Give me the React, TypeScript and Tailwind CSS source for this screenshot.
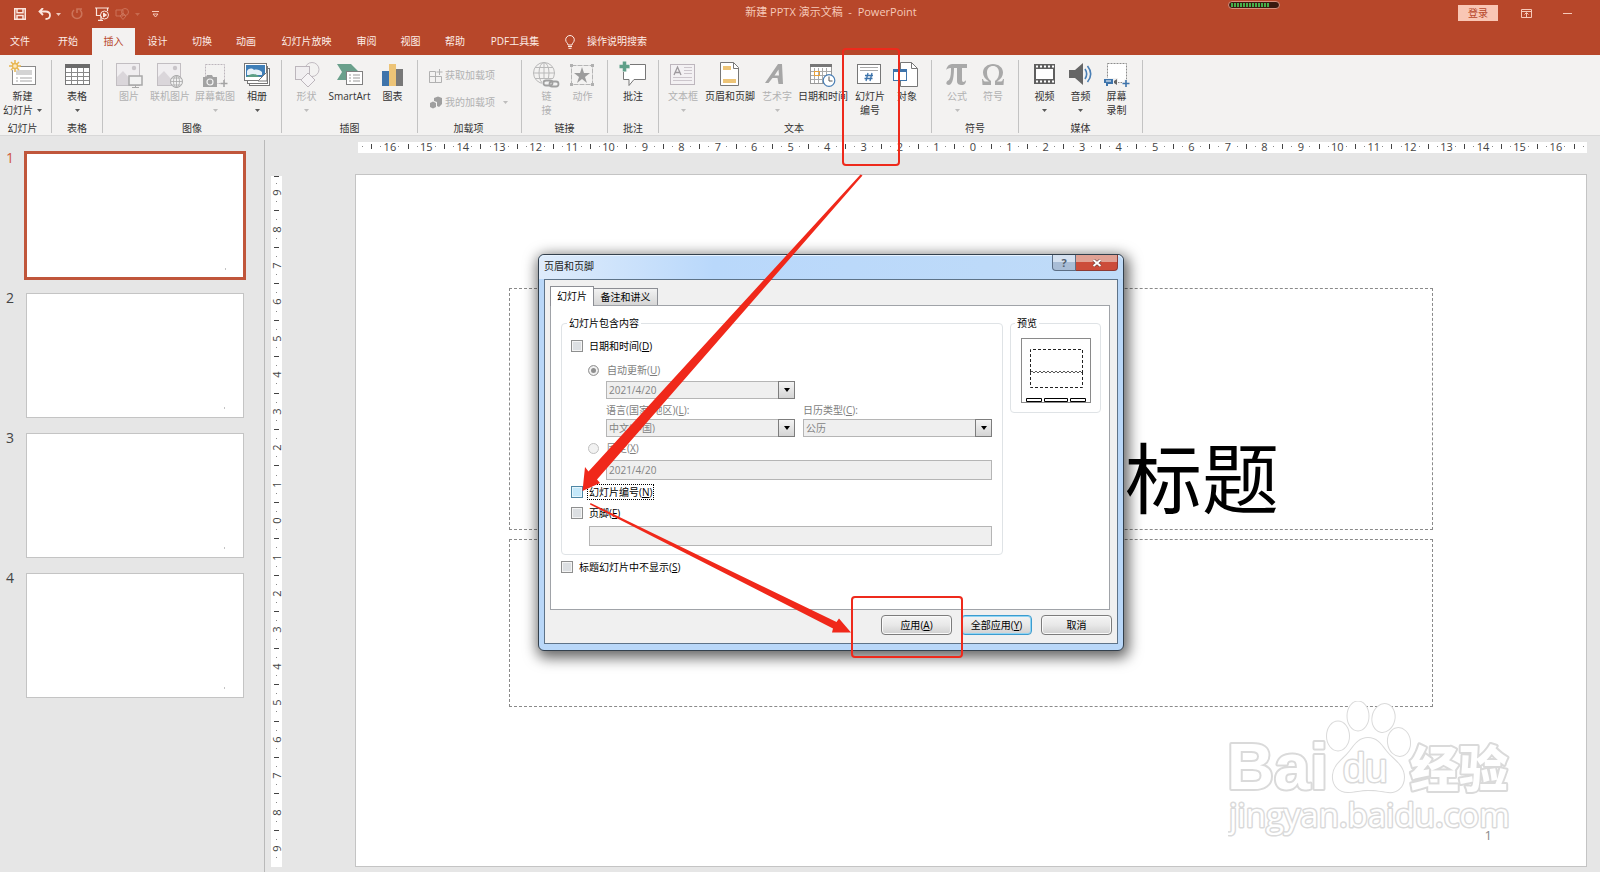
import React from 'react';

type Mark = { kind: 'num'; text: string } | { kind: 'tick' } | { kind: 'dot' };

function rulerMarks(from: number, to: number): Mark[] {
  const marks: Mark[] = [];
  for (let q = from; q <= to; q++) {
    const r = Math.abs(q) % 4;
    if (r === 0) marks.push({ kind: 'num', text: String(Math.abs(q) / 4) });
    else if (r === 2) marks.push({ kind: 'tick' });
    else marks.push({ kind: 'dot' });
  }
  return marks;
}

function HorizontalRuler() {
  return (
    <div className="flex h-[11px] items-center bg-white pb-0.5 text-[11px] leading-[11px] text-[#444]">
      {rulerMarks(-67, 67).map((m, i) => (
        <span key={i} className="flex min-w-0 flex-1 items-center justify-center">
          {m.kind === 'num' && <span>{m.text}</span>}
          {m.kind === 'tick' && <span className="h-[5px] w-px shrink-0 bg-[#444]" />}
          {m.kind === 'dot' && <span className="size-px shrink-0 bg-[#888]" />}
        </span>
      ))}
    </div>
  );
}

function VerticalRuler() {
  return (
    <div className="flex w-[11px] flex-col items-center bg-white pb-[5px] text-[11px] leading-[11px] text-[#444]">
      <span className="mb-0.5 h-px w-[5px] bg-[#444]" />
      {rulerMarks(-37, 37).map((m, i) => (
        <span key={i} className="flex min-h-0 flex-1 items-center justify-center">
          {m.kind === 'num' && <span className="-rotate-90">{m.text}</span>}
          {m.kind === 'tick' && <span className="h-px w-[5px] shrink-0 bg-[#444]" />}
          {m.kind === 'dot' && <span className="size-px shrink-0 bg-[#888]" />}
        </span>
      ))}
    </div>
  );
}

function Icon({ children }: { children: React.ReactNode }) {
  return (
    <svg viewBox="0 0 28 28" className="size-7 shrink-0" fill="none" aria-hidden="true">
      {children}
    </svg>
  );
}

const NewSlideIcon = (
  <Icon>
    <rect x="3.5" y="6.5" width="23" height="18" fill="#fff" stroke="#8a8a8a" />
    <rect x="7" y="10" width="16" height="5" fill="#d4d4d4" />
    <path d="M7 18h2M11 18h12M7 21h2M11 21h12" stroke="#a5a5a5" />
    <circle cx="6" cy="6" r="5" fill="#f2f2f2" />
    <path d="M6 0v3M6 9v3M0 6h3M9 6h3M2 2l2 2M8 8l2 2M10 2l-2 2M4 8l-2 2" stroke="#e8b650" strokeWidth="1.5" />
    <circle cx="6" cy="6" r="2.5" stroke="#e8b650" strokeWidth="1.3" fill="#fbe9c0" />
  </Icon>
);
const TableIcon = (
  <Icon>
    <rect x="2.5" y="4.5" width="24" height="20" fill="#fff" stroke="#777" />
    <rect x="2" y="4" width="25" height="4" fill="#6b6b6b" />
    <path d="M3 12.500h23M3 16.500h23M3 20.500h23M8.500 8v16M14.500 8v16M20.500 8v16" stroke="#8a8a8a" />
  </Icon>
);
const PictureIcon = (
  <Icon>
    <rect x="1.500" y="3.500" width="23" height="22" fill="#f0eef0" stroke="#c2bec2" />
    <circle cx="19" cy="8" r="2.200" fill="#c9c5c9" />
    <path d="M2 17l6-6 8 9v5H2z" fill="#dad6da" />
    <rect x="14" y="16" width="13" height="9" fill="#f2f2f2" stroke="#a8a8a8" strokeWidth="1.500" />
    <path d="M17 27.500h7M20.500 25v2" stroke="#a8a8a8" />
  </Icon>
);
const OnlinePictureIcon = (
  <Icon>
    <rect x="1.500" y="3.500" width="23" height="22" fill="#f0eef0" stroke="#c2bec2" />
    <circle cx="19" cy="8" r="2.200" fill="#c9c5c9" />
    <path d="M2 17l6-6 8 9v5H2z" fill="#dad6da" />
    <circle cx="20.500" cy="21.500" r="6" fill="#f2f2f2" stroke="#a8a8a8" />
    <path d="M14.500 21.500h12M20.500 15.500v12M16 18h9M16 25h9" stroke="#a8a8a8" strokeWidth=".8" />
    <ellipse cx="20.500" cy="21.500" rx="3" ry="6" stroke="#a8a8a8" strokeWidth=".8" />
  </Icon>
);
const ScreenshotIcon = (
  <Icon>
    <rect x="4.500" y="4.500" width="19" height="19" stroke="#bcb6bc" strokeDasharray="2 1" />
    <path d="M2 17h3l1-2h5l1 2h4v10H2z" fill="#a3a3a3" />
    <circle cx="9" cy="22" r="3" stroke="#f2f2f2" strokeWidth="1.200" />
    <path d="M19.500 23.500h7M23 20v7" stroke="#a3a3a3" strokeWidth="1.500" />
  </Icon>
);
const AlbumIcon = (
  <Icon>
    <rect x="6.500" y="8.500" width="20" height="17" fill="#fff" stroke="#777" />
    <rect x="4.500" y="6.500" width="20" height="17" fill="#fff" stroke="#777" />
    <rect x="1.500" y="3.500" width="22" height="17" fill="#fff" stroke="#777" />
    <rect x="3" y="5" width="19" height="12" fill="#3f7fb8" />
    <path d="M4 11c2-3 5-3 7-1 3-1 6 0 8 2v3H4z" fill="#e8f1f8" />
    <path d="M3 17c4-3 7-4 11-2l3 2z" fill="#5d9f86" />
    <path d="M15 21l9-9v9z" fill="#fff" stroke="#777" />
  </Icon>
);
const ShapesIcon = (
  <Icon>
    <circle cx="19" cy="9.500" r="7" stroke="#c2bcc2" />
    <rect x="2.500" y="6.500" width="14" height="13" fill="#f0eef0" stroke="#bcb6bc" />
    <path d="M15 13l7 7-7 7-7-7z" fill="#f5f3f5" stroke="#bcb6bc" />
  </Icon>
);
const SmartArtIcon = (
  <Icon>
    <path d="M1 4h14l7 7-3 4-6 5H1l5-8z" fill="#6aa08c" />
    <rect x="10.500" y="11.500" width="16" height="13" fill="#fff" stroke="#808080" />
    <path d="M13 15h2M17 15h7M13 18h2M17 18h7M13 21h2M17 21h7" stroke="#999" />
  </Icon>
);
const ChartIcon = (
  <Icon>
    <rect x="3" y="11" width="7" height="15" fill="#3e74ab" />
    <rect x="10" y="4" width="7" height="22" fill="#edc477" />
    <rect x="17" y="9" width="7" height="17" fill="#787878" />
  </Icon>
);
const LinkIcon = (
  <Icon>
    <circle cx="11" cy="13" r="10.500" stroke="#b9b9b9" />
    <ellipse cx="11" cy="13" rx="5" ry="10.500" stroke="#b9b9b9" />
    <path d="M11 2.500v21M.5 13h21M2 7.500h18M2 18.500h18" stroke="#b9b9b9" />
    <rect x="9" y="19" width="18" height="9" fill="#f2f2f2" />
    <rect x="10.500" y="20.500" width="9" height="5" rx="2.500" stroke="#a0a0a0" strokeWidth="1.800" />
    <rect x="16.500" y="21.500" width="9" height="5" rx="2.500" stroke="#a0a0a0" strokeWidth="1.800" />
  </Icon>
);
const ActionIcon = (
  <Icon>
    <rect x="2.500" y="5.500" width="21" height="19" stroke="#b5b5b5" strokeDasharray="5 1" />
    <path d="M1 4h3v3H1zM22 4h3v3h-3zM1 23h3v3H1zM22 23h3v3h-3z" fill="#b0b0b0" />
    <path d="M13 7l2 6h6l-5 4 2 6-5-4-5 4 2-6-5-4h6z" fill="#9c9c9c" />
  </Icon>
);
const CommentIcon = (
  <Icon>
    <path d="M5.500 4.500h21v15H15l-5 6v-6H4.500v-15z" fill="#fff" stroke="#777" />
    <path d="M5.500 1v11M0 6.500h11" stroke="#f2f2f2" strokeWidth="5.500" />
    <path d="M5.500 1.500v10M.5 6.500h10" stroke="#5e9f88" strokeWidth="3.500" />
  </Icon>
);
const TextBoxIcon = (
  <Icon>
    <rect x="1.500" y="4.500" width="24" height="20" fill="#f3f1f3" stroke="#bdb6bd" />
    <path d="M5 15l3.500-8L12 15M6 12.500h5" stroke="#9e9a9e" strokeWidth="1.300" />
    <path d="M15 7.500h8M15 10.500h8M15 13.500h8M4 17.500h19M4 20.500h19" stroke="#ccc6cc" />
  </Icon>
);
const HeaderFooterIcon = (
  <Icon>
    <path d="M4.500 2.500h13l5 5v18h-18z" fill="#fff" stroke="#777" />
    <path d="M17.500 2.500v6h5" stroke="#777" />
    <path d="M7 6h8v4H7zM7 19h13v4H7z" fill="#edc477" />
  </Icon>
);
const WordArtIcon = (
  <Icon>
    <path d="M2 23h3.500l4-5h5l1 6H20L19 4h-4zM11.500 15.500l4-6 .5 6z" fill="#a6a6a6" fillRule="evenodd" />
  </Icon>
);
const DateTimeIcon = (
  <Icon>
    <rect x="1.500" y="4.500" width="21" height="19" fill="#fff" stroke="#999" />
    <rect x="1" y="4" width="22" height="3" fill="#777" />
    <path d="M2 11.500h20M2 15.500h20M2 19.500h20M5.500 8v15M9.500 8v15M13.500 8v15M17.500 8v15" stroke="#aaa" />
    <rect x="5.500" y="11.500" width="5" height="4" stroke="#e9a23b" />
    <circle cx="20" cy="20.500" r="5.800" fill="#fff" stroke="#4a7fb5" strokeWidth="1.200" />
    <path d="M20 16.500v4.500h3.500" stroke="#555" />
  </Icon>
);
const SlideNumberIcon = (
  <Icon>
    <rect x="1.500" y="4.500" width="23" height="19" fill="#fff" stroke="#777" />
    <path d="M4 7.500h18M4 10.500h18" stroke="#aaa" />
    <path d="M12 13l-2 8M16 13l-2 8M9 15.500h8M8.500 18.500h8" stroke="#3e74ab" strokeWidth="1.300" />
  </Icon>
);
const ObjectIcon = (
  <Icon>
    <path d="M7.500 2.500h11l6 6v18h-17z" fill="#fff" stroke="#777" />
    <path d="M18.500 2.500v6h6" stroke="#777" />
    <rect x=".5" y="9.500" width="13" height="11" fill="#fff" stroke="#3e74ab" />
    <rect x="0" y="9" width="14" height="3" fill="#3e74ab" />
  </Icon>
);
const PiIcon = (
  <Icon>
    <path d="M3 10c1-4 3-6 6-6h15v4h-5v12c0 3 3 2 4 0 0 4-2 5-4 5-3 0-5-1-5-4V8h-3c0 7-1 17-5 17-4 0-3-4 0-5 2-3 2-8 2-12-3 0-4 1-5 2z" fill="#a9a9a9" />
  </Icon>
);
const OmegaIcon = (
  <Icon>
    <path d="M3 19h1c.5 2 1 2.500 3 2.500h3C6 19 4 16 4 12.500 4 7.500 8.500 4 14 4s10 3.500 10 8.500c0 3.500-2 6.500-6 9h3c2 0 2.500-.5 3-2.500h1l-.5 6H16v-4c3-2 4-5 4-8.500C20 8.500 17.500 6 14 6s-6 2.500-6 6.500c0 3.500 1 6.500 4 8.500v4H3.500z" fill="#a9a9a9" />
  </Icon>
);
const VideoIcon = (
  <Icon>
    <rect x="3" y="4" width="21" height="20" fill="#5f5f5f" />
    <rect x="5" y="9" width="17" height="10" fill="#fff" />
    <path d="M5 6.500h18M5 21.500h18" stroke="#fff" strokeWidth="2" strokeDasharray="2 2" />
  </Icon>
);
const AudioIcon = (
  <Icon>
    <path d="M2 10h6l8-7v22l-8-7H2z" fill="#666" />
    <path d="M18 9c2 3 2 7 0 10M20.500 6c4 5 4 11 0 16" stroke="#4a7fb5" strokeWidth="1.600" />
  </Icon>
);
const ScreenRecordIcon = (
  <Icon>
    <rect x="4.500" y="3.500" width="19" height="19" fill="#fff" stroke="#8c8c8c" strokeDasharray="2 1" />
    <path d="M0 18h15v8H0z" fill="#f2f2f2" />
    <path d="M1 19h9v5H5v2H3v-3H1z" fill="#3e74ab" />
    <path d="M3 21h5" stroke="#fff" />
    <path d="M11 21l3-2v6l-3-2z" fill="#666" />
    <path d="M19 23.500h8M23 19.500v8" stroke="#f2f2f2" strokeWidth="4" />
    <path d="M19.500 23.500h7M23 20v7" stroke="#3e74ab" strokeWidth="1.600" />
  </Icon>
);

function Caret({ className = '' }: { className?: string }) {
  return (
    <svg viewBox="0 0 5 3" className={`h-[3px] w-[5px] shrink-0 opacity-80 ${className}`} aria-hidden="true">
      <path d="M0 0h5L2.500 3z" fill="currentColor" />
    </svg>
  );
}

type Tool = {
  icon: React.ReactNode;
  lines: string[];
  width: string;
  disabled?: boolean;
  caret?: 'below' | 'inline';
};

function ToolButton({ icon, lines, width, disabled, caret }: Tool) {
  return (
    <button
      type="button"
      disabled={disabled}
      className={`flex shrink-0 flex-col items-center whitespace-nowrap text-[10px] leading-[13px] ${width} ${disabled ? 'text-[#b1b1b1]' : 'text-[#333]'}`}
    >
      {icon}
      {lines.map((l, i) => (
        <span key={i} className="mt-px flex items-center gap-1 first-of-type:mt-0.5">
          {l}
          {caret === 'inline' && i === lines.length - 1 && <Caret />}
        </span>
      ))}
      {caret === 'below' && <Caret className="mt-1.5" />}
    </button>
  );
}

function Group({ title, width, children }: { title: string; width: string; children: React.ReactNode }) {
  return (
    <section className={`flex shrink-0 flex-col items-center justify-between border-r border-[#c3c3c3] ${width}`}>
      <div className="flex justify-center">{children}</div>
      <h2 className="text-[10px] leading-[9px] text-[#333]">{title}</h2>
    </section>
  );
}

const groups: { title: string; width: string; tools: Tool[] }[] = [
  {
    title: '幻灯片',
    width: 'w-[52px] pr-1.5',
    tools: [{ icon: NewSlideIcon, lines: ['新建', '幻灯片'], width: 'w-[46px]', caret: 'inline' }],
  },
  { title: '表格', width: 'w-[51px]', tools: [{ icon: TableIcon, lines: ['表格'], width: 'w-10', caret: 'below' }] },
  {
    title: '图像',
    width: 'w-[179px]',
    tools: [
      { icon: PictureIcon, lines: ['图片'], width: 'w-10', disabled: true },
      { icon: OnlinePictureIcon, lines: ['联机图片'], width: 'w-[42px]', disabled: true },
      { icon: ScreenshotIcon, lines: ['屏幕截图'], width: 'w-12', disabled: true, caret: 'below' },
      { icon: AlbumIcon, lines: ['相册'], width: 'w-9', caret: 'below' },
    ],
  },
  {
    title: '插图',
    width: 'w-[136px]',
    tools: [
      { icon: ShapesIcon, lines: ['形状'], width: 'w-[34px]', disabled: true, caret: 'below' },
      { icon: SmartArtIcon, lines: ['SmartArt'], width: 'w-[52px]' },
      { icon: ChartIcon, lines: ['图表'], width: 'w-[34px]' },
    ],
  },
];

const moreGroups: { title: string; width: string; tools: Tool[] }[] = [
  {
    title: '链接',
    width: 'w-[86px]',
    tools: [
      { icon: LinkIcon, lines: ['链', '接'], width: 'w-9', disabled: true },
      { icon: ActionIcon, lines: ['动作'], width: 'w-9', disabled: true },
    ],
  },
  { title: '批注', width: 'w-[51px]', tools: [{ icon: CommentIcon, lines: ['批注'], width: 'w-10' }] },
  {
    title: '文本',
    width: 'w-[273px] pr-0.5',
    tools: [
      { icon: TextBoxIcon, lines: ['文本框'], width: 'w-[38px]', disabled: true, caret: 'below' },
      { icon: HeaderFooterIcon, lines: ['页眉和页脚'], width: 'w-14' },
      { icon: WordArtIcon, lines: ['艺术字'], width: 'w-[38px]', disabled: true, caret: 'below' },
      { icon: DateTimeIcon, lines: ['日期和时间'], width: 'w-[54px]' },
      { icon: SlideNumberIcon, lines: ['幻灯片', '编号'], width: 'w-10' },
      { icon: ObjectIcon, lines: ['对象'], width: 'w-[34px]' },
    ],
  },
  {
    title: '符号',
    width: 'w-[87px]',
    tools: [
      { icon: PiIcon, lines: ['公式'], width: 'w-9', disabled: true, caret: 'below' },
      { icon: OmegaIcon, lines: ['符号'], width: 'w-9', disabled: true },
    ],
  },
  {
    title: '媒体',
    width: 'w-[124px]',
    tools: [
      { icon: VideoIcon, lines: ['视频'], width: 'w-9', caret: 'below' },
      { icon: AudioIcon, lines: ['音频'], width: 'w-9', caret: 'below' },
      { icon: ScreenRecordIcon, lines: ['屏幕', '录制'], width: 'w-9' },
    ],
  },
];

function TitleBar() {
  return (
    <header className="flex h-7 items-center bg-[#b7472a] text-[10px] text-[#f6c9b9]">
      <div className="flex flex-1 items-center pl-3.5">
        <button type="button" aria-label="保存" className="text-[#fbe6de]">
          <svg viewBox="0 0 12 12" className="size-3" fill="none" stroke="currentColor">
            <path d="M.75.75h10.500v10.500H.75zM3 .75v4h6v-4M3 11V7.500h6V11" strokeWidth="1.500" />
          </svg>
        </button>
        <button type="button" aria-label="撤消" className="ml-3 flex items-center gap-1 text-[#fbe6de]">
          <svg viewBox="0 0 14 12" className="h-3 w-3.5" fill="none" stroke="currentColor" strokeWidth="1.800">
            <path d="M5 0L1.500 3.500 5 7M2 3.500h5.500c6 0 6 7.500 0 7.500" />
          </svg>
          <Caret />
        </button>
        <button type="button" aria-label="重复" className="ml-2.5 text-[#cc7359]">
          <svg viewBox="0 0 12 12" className="size-3" fill="none" stroke="currentColor" strokeWidth="1.600">
            <path d="M3 2a4.800 4.800 0 1 0 6 0M6 5V1h5" />
          </svg>
        </button>
        <button type="button" aria-label="从头开始" className="ml-3 text-[#fbe6de]">
          <svg viewBox="0 0 14 14" className="size-3.5" fill="none" stroke="currentColor">
            <path d="M0 1h14M1.500 1v7.500H6M12.500 1v3M3 13.400h5M6 9v4" strokeWidth="1.200" />
            <circle cx="9.500" cy="8" r="4" />
            <path d="M8.500 6v4l3-2z" fill="currentColor" />
          </svg>
        </button>
        <button type="button" aria-label="形状" className="ml-1.5 flex items-center gap-1.5 text-[#cc7359]">
          <svg viewBox="0 0 14 12" className="h-3 w-3.5" fill="none" stroke="currentColor">
            <circle cx="10" cy="4" r="3.500" />
            <path d="M1 2h7v6H1zM8 5l3 3-3 3.500L5 8z" />
          </svg>
          <Caret />
        </button>
        <button type="button" aria-label="自定义快速访问工具栏" className="ml-3">
          <svg viewBox="0 0 7 7" className="size-[7px]" fill="none" stroke="currentColor">
            <path d="M0 .5h7M1 3l2.500 3L6 3z" />
          </svg>
        </button>
      </div>
      <h1 className="ml-12 whitespace-pre pb-1 text-[11px]">新建 PPTX 演示文稿{'  -  '}PowerPoint</h1>
      <div className="flex flex-1 items-center justify-end pb-0.5">
        <div className="mr-[178px] mb-4 flex h-2 w-[52px] gap-px overflow-hidden rounded-full border border-[#d88f7d] bg-[#3a1a10] px-0.5 py-px">
          {Array.from({ length: 13 }, (_, i) => (
            <span key={i} className="w-0.5 bg-[#44b04a]" />
          ))}
        </div>
        <button type="button" className="h-4 w-10 bg-[#f9c6b4] text-[10px] leading-4 text-[#b7472a]">
          登录
        </button>
        <button type="button" aria-label="功能区显示选项" className="ml-[23px]">
          <svg viewBox="0 0 11 9" className="h-[9px] w-[11px]" fill="none" stroke="currentColor">
            <path d="M.5.5h10v8H.5zM.5 2.500h10M5.500 8V4M3.500 5.500l2-2 2 2" />
          </svg>
        </button>
        <button type="button" aria-label="最小化" className="mr-7 ml-[31px] flex h-3 w-[9px] items-center">
          <span className="h-px w-full bg-current" />
        </button>
      </div>
    </header>
  );
}

const tabs: { label: string; width: string; active?: boolean }[] = [
  { label: '文件', width: 'w-10' },
  { label: '开始', width: 'w-[52px] pl-1' },
  { label: '插入', width: 'w-[43px]', active: true },
  { label: '设计', width: 'w-[45px]' },
  { label: '切换', width: 'w-11' },
  { label: '动画', width: 'w-11' },
  { label: '幻灯片放映', width: 'w-[77px]' },
  { label: '审阅', width: 'w-[43px]' },
  { label: '视图', width: 'w-[45px]' },
  { label: '帮助', width: 'w-11' },
  { label: 'PDF工具集', width: 'w-[76px]' },
];

function TabBar() {
  return (
    <nav className="flex h-[27px] items-stretch bg-[#b7472a] text-[10px] text-[#fdeee8]">
      {tabs.map((t) => (
        <button
          key={t.label}
          type="button"
          className={`shrink-0 whitespace-nowrap ${t.width} ${t.active ? 'bg-[#f3f2f1] text-[#b7472a]' : ''}`}
        >
          {t.label}
        </button>
      ))}
      <button type="button" className="ml-3 flex items-center gap-3">
        <svg viewBox="0 0 10 14" className="h-3.5 w-2.5" fill="none" stroke="currentColor">
          <path d="M3 10C3 8 .7 7.500.7 4.800a4.300 4.300 0 0 1 8.600 0C9.300 7.500 7 8 7 10zM3 11.500h4M3.500 13.300h3" />
        </svg>
        操作说明搜索
      </button>
    </nav>
  );
}

function Ribbon() {
  return (
    <div className="flex h-[81px] items-stretch overflow-hidden border-b border-[#d8d8d8] bg-[#f3f2f1] pt-[5px] pb-0.5">
      {groups.map((g) => (
        <Group key={g.title} title={g.title} width={g.width}>
          {g.tools.map((t) => (
            <ToolButton key={t.lines.join('')} {...t} />
          ))}
        </Group>
      ))}
      <Group title="加载项" width="w-[104px] pr-0.5">
        <div className="flex flex-col gap-3 pt-2 text-[10px] text-[#b1b1b1]">
          <button type="button" disabled className="flex h-[15px] items-center gap-0.5">
            <svg viewBox="0 0 14 14" className="size-3.5" fill="none" stroke="currentColor">
              <path d="M.5 2.500h6v11h-6zM.5 7.500h12v6h-12M10.500 0v6M7.500 3h6" />
            </svg>
            获取加载项
          </button>
          <button type="button" disabled className="flex h-[15px] items-center gap-0.5">
            <svg viewBox="0 0 14 14" className="size-3.5" fill="#9f9f9f">
              <path d="M5 2l4-1.500L13 2v6l-3 3-2-1V6L5 5zM1 7l3-1.500L7 7v4l-3 1.500L1 11z" />
            </svg>
            我的加载项
            <Caret className="ml-1.5" />
          </button>
        </div>
      </Group>
      {moreGroups.map((g) => (
        <Group key={g.title} title={g.title} width={g.width}>
          {g.tools.map((t) => (
            <ToolButton key={t.lines.join('')} {...t} />
          ))}
        </Group>
      ))}
    </div>
  );
}

function SlidePane() {
  return (
    <aside className="mt-1 w-[265px] shrink-0 border-r border-[#b9b9b9]">
      <ol className="flex flex-col gap-4 pt-[13px] pl-1.5">
        {[1, 2, 3, 4].map((n) => (
          <li key={n} className="flex h-[125px] gap-3 text-[14px] leading-[9px] not-last:-mb-px">
            <span className={`w-2 ${n === 1 ? 'text-[#d0573a]' : 'text-[#444]'}`}>{n}</span>
            <button
              type="button"
              aria-label={`幻灯片 ${n}`}
              className={`flex w-[218px] items-end justify-end bg-white px-[18px] pb-2 ${n === 1 ? 'outline-[3px] -outline-offset-1 outline-[#c0563b]' : 'border border-[#c4c4c4]'}`}
            >
              <span className="h-0.5 w-px bg-[#c4c4c4]" />
            </button>
          </li>
        ))}
      </ol>
    </aside>
  );
}

function Check({ label, k, hot, focus }: { label: string; k: string; hot?: boolean; focus?: boolean }) {
  return (
    <label className={`flex items-center gap-1.5 text-black ${focus ? 'h-4' : 'h-3.5'}`}>
      <input
        type="checkbox"
        className={`size-3 shrink-0 appearance-none border ${hot ? 'border-[#4f87a5] bg-[#c4e8fa] shadow-[inset_0_0_0_1px_#e6f6fd]' : 'border-[#8e8f8f] bg-[#dcdfe2] shadow-[inset_0_0_0_1px_#f4f4f4]'}`}
      />
      <span className={focus ? '-ml-0.5 border border-dotted border-black px-px leading-[14px]' : ''}>
        {label}(<u>{k}</u>)
      </span>
    </label>
  );
}

function Radio({ label, k, on }: { label: string; k: string; on?: boolean }) {
  return (
    <label className="flex h-3.5 items-center gap-2 text-[#7d7d7d]">
      <input
        type="radio"
        name="date-mode"
        disabled
        defaultChecked={on}
        className="size-[11px] shrink-0 appearance-none rounded-full border border-[#c0c0c0] bg-[#f2f2f2] checked:border-[#a0a0a0] checked:bg-[#8f8f8f] checked:shadow-[inset_0_0_0_2px_#f2f2f2]"
      />
      <span>
        {label}(<u>{k}</u>)
      </span>
    </label>
  );
}

function Combo({ value, label }: { value: string; label: string }) {
  return (
    <div className="relative h-[18px] w-[189px] text-[#838383]">
      <select
        disabled
        aria-label={label}
        className="block size-full appearance-none border border-[#b5b5b5] bg-[#efefef] px-0.5 leading-none opacity-100"
      >
        <option>{value}</option>
      </select>
      <span className="pointer-events-none absolute inset-y-0 right-0 flex w-[17px] items-center justify-center border border-[#7d7d7d] bg-linear-to-b from-[#f4f4f4] to-[#d4d4d4] text-black">
        <svg viewBox="0 0 6 4" className="h-1 w-1.5" aria-hidden="true">
          <path d="M0 0h6L3 4z" fill="currentColor" />
        </svg>
      </span>
    </div>
  );
}

function DialogButton({ label, k, primary }: { label: string; k?: string; primary?: boolean }) {
  return (
    <button
      type="button"
      className={`h-5 w-[71px] rounded-sm border bg-linear-to-b from-[#f4f4f4] via-[#e8e8e8] to-[#d0d0d0] text-black ${primary ? 'border-[#3c9ccf] shadow-[inset_0_0_0_1px_#8fd4f3]' : 'border-[#7c7c7c] shadow-[inset_0_0_0_1px_#fafafa]'}`}
    >
      {label}
      {k && (
        <>
          (<u>{k}</u>)
        </>
      )}
    </button>
  );
}

function HeaderFooterDialog() {
  return (
    <div
      role="dialog"
      aria-label="页眉和页脚"
      className="absolute top-[254px] left-[538px] w-[586px] rounded-md border border-[#33404d] bg-[#b9d7f8] px-[5px] pb-1.5 text-[10px] leading-[14px] shadow-[2px_4px_14px_3px_rgba(0,0,0,0.6)]"
    >
      <div className="-mx-[5px] flex h-6 items-start rounded-t-md bg-linear-to-r from-[#dfecfb] via-[#b9d8fb] via-30% to-[#bfdbf8] pr-[5px] pl-[5px] shadow-[inset_0_1px_0_#e8f3ff]">
        <span className="flex-1 pt-1 text-[#222]">页眉和页脚</span>
        <button
          type="button"
          aria-label="帮助"
          className="flex h-4 w-6 items-center justify-center rounded-bl-sm border border-t-0 border-[#5c6e85] bg-linear-to-b from-[#d5e1f0] from-50% to-[#a9bdd6] to-50% text-[11px] font-bold text-[#53606e]"
        >
          ?
        </button>
        <button
          type="button"
          aria-label="关闭"
          className="flex h-4 w-[42px] items-center justify-center rounded-br-sm border border-t-0 border-l-0 border-[#8d3a34] bg-linear-to-b from-[#e0a194] from-50% to-[#cc4c3a] to-50%"
        >
          <svg viewBox="0 0 10 8" className="h-2 w-2.5" aria-hidden="true">
            <path d="M1.500 1l7 6M8.500 1l-7 6" stroke="#6b3a36" strokeWidth="3.200" />
            <path d="M1.500 1l7 6M8.500 1l-7 6" stroke="#fff" strokeWidth="2" />
          </svg>
        </button>
      </div>
      <div className="border border-[#5e7388] bg-[#f0f0f0] pt-1.5 pr-[5px] pb-2 pl-[5px]">
        <div role="tablist" className="flex items-end">
          <button
            type="button"
            role="tab"
            aria-selected="true"
            className="relative z-10 -mb-px h-5 w-11 border border-b-0 border-[#8c8e94] bg-white pb-0.5"
          >
            幻灯片
          </button>
          <button
            type="button"
            role="tab"
            aria-selected="false"
            className="h-[17px] w-16 border border-b-0 border-l-0 border-[#8c8e94] bg-linear-to-b from-[#f2f2f2] to-[#d6d6d6]"
          >
            备注和讲义
          </button>
        </div>
        <div className="mr-0.5 border border-[#a0a3a8] bg-white pt-2.5 pr-2 pb-[35px] pl-2.5">
          <div className="flex items-start justify-between">
            <fieldset className="w-[442px] rounded-sm border border-[#dfe3e6] pt-[9px] pb-2 pl-[9px]">
              <legend className="-ml-1 px-0.5">幻灯片包含内容</legend>
              <Check label="日期和时间" k="D" />
              <div className="mt-2.5 pl-[17px]">
                <Radio label="自动更新" k="U" on />
                <div className="pl-[18px]">
                  <div className="mt-1">
                    <Combo value="2021/4/20" label="日期" />
                  </div>
                  <div className="mt-1 flex gap-2 text-[#7d7d7d]">
                    <div className="w-[189px]">
                      语言(国家/地区)(<u>L</u>):
                    </div>
                    <div>
                      日历类型(<u>C</u>):
                    </div>
                  </div>
                  <div className="mt-0.5 flex gap-2">
                    <Combo value="中文(中国)" label="语言" />
                    <Combo value="公历" label="日历类型" />
                  </div>
                </div>
                <div className="mt-1">
                  <Radio label="固定" k="X" />
                </div>
                <input
                  disabled
                  aria-label="固定日期"
                  defaultValue="2021/4/20"
                  className="mt-[5px] ml-[18px] block h-5 w-[386px] border border-[#b5b5b5] bg-[#efefef] px-0.5 text-[#838383]"
                />
              </div>
              <div className="mt-1">
                <Check label="幻灯片编号" k="N" hot focus />
              </div>
              <div className="mt-1.5">
                <Check label="页脚" k="F" />
              </div>
              <input
                disabled
                aria-label="页脚"
                className="mt-1.5 ml-[18px] block h-5 w-[403px] border border-[#b5b5b5] bg-[#efefef]"
              />
            </fieldset>
            <fieldset className="flex w-[91px] justify-center rounded-sm border border-[#dfe3e6] pt-2 pb-[9px]">
              <legend className="ml-1 px-0.5">预览</legend>
              <svg viewBox="0 0 70 65" className="h-[65px] w-[70px]" fill="none" aria-hidden="true">
                <rect x=".5" y=".5" width="69" height="64" stroke="#8a8a8a" />
                <path d="M9.500 34V11.500h52V34M9.500 34v15.500h52V34" stroke="#222" strokeDasharray="3 2" />
                <path
                  d="M9 35l2-2 2 2 2-2 2 2 2-2 2 2 2-2 2 2 2-2 2 2 2-2 2 2 2-2 2 2 2-2 2 2 2-2 2 2 2-2 2 2 2-2 2 2 2-2 2 2 2-2 2 2"
                  stroke="#444"
                  strokeWidth=".9"
                />
                <path d="M5.500 60.500h15v3h-15zM23.500 60.500h23v3h-23zM49.500 60.500h15v3h-15z" stroke="#000" />
              </svg>
            </fieldset>
          </div>
          <div className="mt-[5px]">
            <Check label="标题幻灯片中不显示" k="S" />
          </div>
        </div>
        <div className="mt-[5px] flex justify-end gap-[9px]">
          <DialogButton label="应用" k="A" />
          <DialogButton label="全部应用" k="Y" primary />
          <DialogButton label="取消" />
        </div>
      </div>
    </div>
  );
}

function Watermark() {
  return (
    <svg
      viewBox="0 0 300 145"
      className="pointer-events-none absolute right-[58px] bottom-5 h-[145px] w-[300px]"
      fill="#fff"
      stroke="#dadada"
      strokeWidth="4"
      strokeLinejoin="round"
      paintOrder="stroke"
    >
      <text x="-1" y="88" fontFamily="Liberation Sans" fontWeight="700" fontSize="65">
        Bai
      </text>
      <g strokeWidth="2">
        <ellipse cx="110" cy="35" rx="11" ry="14.500" />
        <ellipse cx="130" cy="15" rx="10.500" ry="14.500" />
        <ellipse cx="155.500" cy="17" rx="11" ry="14" transform="rotate(12 155.500 17)" />
        <ellipse cx="171" cy="41" rx="11" ry="14" transform="rotate(-8 171 41)" />
        <path d="M140 37c8 0 12 5 18 13 6 8 18 14 18 26 0 11-8 16-16 15-7-1-12-2-20-2s-13 2-20 2c-9 0-16-7-15-17 1-11 10-15 17-24 6-8 10-13 18-13z" />
      </g>
      <text x="115" y="81" fontFamily="Liberation Sans" fontSize="40" strokeWidth="3">
        du
      </text>
      <text x="182" y="86" fontFamily="Noto Sans CJK SC" fontWeight="900" fontSize="49">
        经验
      </text>
      <text x="1" y="126" fontFamily="Open Sans" fontSize="33" strokeWidth="3">
        jingyan.baidu.com
      </text>
    </svg>
  );
}

function Annotations() {
  return (
    <div className="pointer-events-none absolute inset-0">
      <div className="absolute top-[48px] left-[842px] h-[118px] w-[58px] rounded-sm border-2 border-[#ee2a1c]" />
      <div className="absolute top-[596px] left-[851px] h-[62px] w-[112px] rounded-sm border-2 border-[#ee2a1c]" />
      <svg className="absolute top-0 left-0 h-[872px] w-[1600px]" viewBox="0 0 1600 872" fill="#f0281a" aria-hidden="true">
        <path d="M862.500 175.500L597 479.500l3 3.500-17.500 8 2.500-24 3.500 4.500L860.500 174.500z" />
        <path d="M590 504.500L833 628.500l-1 4 19 0-12-14-2.500 3.500L590.500 503z" />
      </svg>
    </div>
  );
}

export default function App() {
  return (
    <div className="relative flex min-h-screen flex-col overflow-hidden bg-[#e6e6e6] font-['Open_Sans','Noto_Sans_CJK_SC',sans-serif]">
      <TitleBar />
      <TabBar />
      <Ribbon />
      <main className="flex flex-1">
        <SlidePane />
        <div className="flex min-w-0 flex-1 flex-col pt-1.5 pr-[13px] pb-[5px]">
          <div className="pl-[93px]">
            <HorizontalRuler />
          </div>
          <div className="flex flex-1 gap-[73px] pt-[21px] pl-1.5">
            <div className="flex pt-0.5">
              <VerticalRuler />
            </div>
            <div className="relative flex flex-1 flex-col gap-[9px] border border-[#c4c4c4] bg-white px-[11.6%] pt-[113px]">
              <div className="flex h-[242px] items-end justify-center border border-dashed border-[#8a8a8a] text-[77px] leading-[100px] whitespace-nowrap text-black">
                单击此处添加标题
              </div>
              <div className="h-[168px] border border-dashed border-[#8a8a8a]" />
              <span className="absolute right-[94px] bottom-6 text-[13px] leading-[14px] text-[#8a8a8a]">1</span>
              <Watermark />
            </div>
          </div>
        </div>
      </main>
      <HeaderFooterDialog />
      <Annotations />
    </div>
  );
}
